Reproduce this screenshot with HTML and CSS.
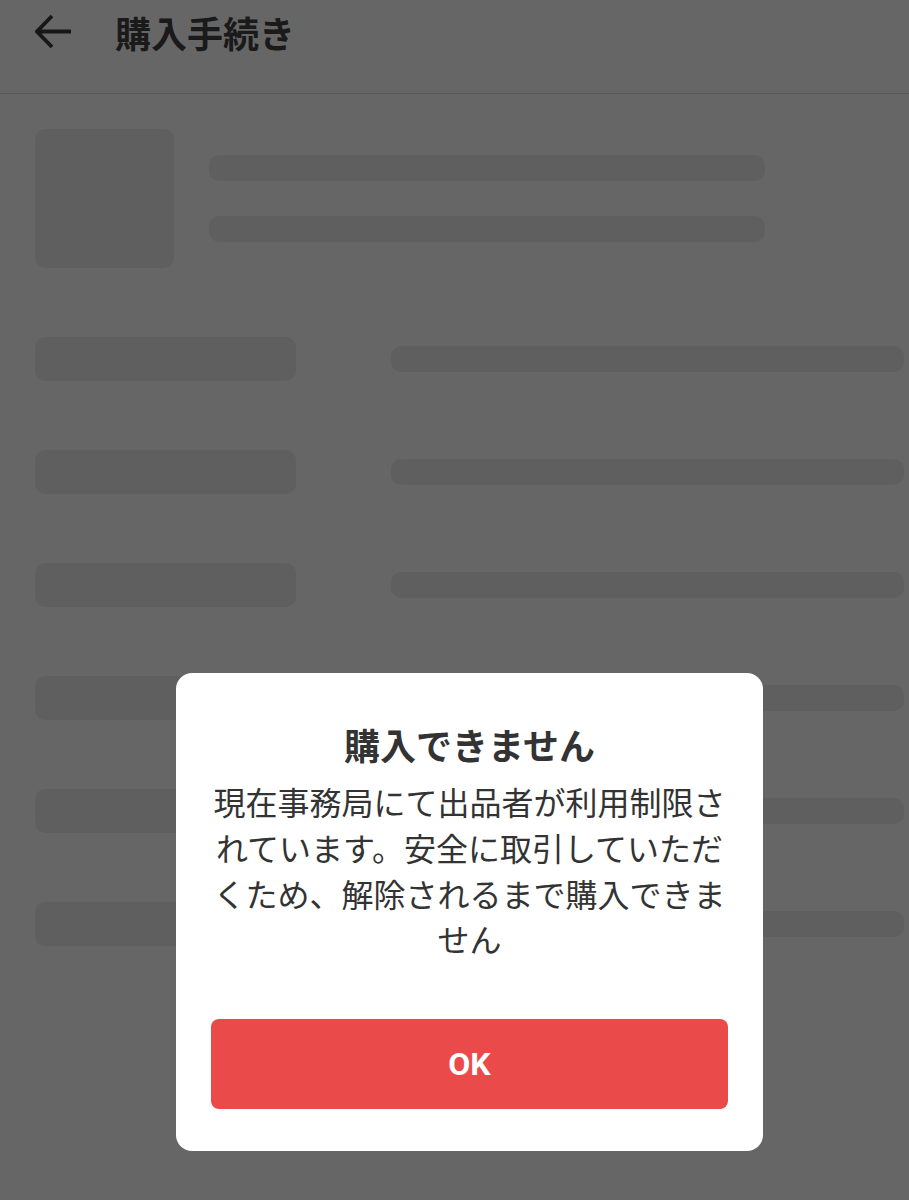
FILE: index.html
```html
<!DOCTYPE html>
<html lang="ja">

<head>
  <meta charset="UTF-8">
  <meta name="viewport" content="width=device-width, initial-scale=1.0">
  <title>購入手続き</title>
  <link rel="stylesheet" href="styles.css">
</head>

<body>
  <!-- ヘッダー -->
  <div class="header">
    <svg class="back" width="36" height="36" viewBox="0 0 36 36">
      <path d="M17 2 L2 17.5 L17 33 M2 17.5 H36" fill="none" stroke="currentColor" stroke-width="3.8" />
    </svg>
    <h1 class="title">購入手続き</h1>
  </div>

  <!-- スケルトン -->
  <div class="content">
    <div class="item">
      <div class="thumb sk"></div>
      <div class="item-lines">
        <div class="line sk"></div>
        <div class="line sk"></div>
      </div>
    </div>
    <div class="row"><div class="label sk"></div><div class="value sk"></div></div>
    <div class="row"><div class="label sk"></div><div class="value sk"></div></div>
    <div class="row"><div class="label sk"></div><div class="value sk"></div></div>
    <div class="row"><div class="label sk"></div><div class="value sk"></div></div>
    <div class="row"><div class="label sk"></div><div class="value sk"></div></div>
    <div class="row"><div class="label sk"></div><div class="value sk"></div></div>
  </div>

  <!-- ダイアログ -->
  <div class="overlay">
    <div class="dialog">
      <h2 class="dialog-title">購入できません</h2>
      <p class="dialog-text">現在事務局にて出品者が利用制限されています。安全に取引していただくため、解除されるまで購入できません</p>
      <button class="ok">OK</button>
    </div>
  </div>
</body>

</html>
```

FILE: styles.css
```css
* {
  margin: 0;
  padding: 0;
  box-sizing: border-box;
}

body {
  background-color: #fff;
  font-family: "Noto Sans CJK JP", "Noto Sans", sans-serif;
  color: #424242;
}

.header {
  display: flex;
  align-items: center;
  height: 94px;
  padding: 0 0 30px 35px;
  border-bottom: 1px solid #dcdcdc;
}

.back {
  color: #3a3a3a;
  margin-right: 44px;
}

.title {
  font-size: 36px;
  font-weight: bold;
  line-height: 1;
}

.content {
  padding: 35px 5px 0 35px;
}

.sk {
  background-color: #eeeeee;
  border-radius: 10px;
}

.item {
  display: flex;
  align-items: center;
  gap: 35px;
  margin-bottom: 69px;
}

.thumb {
  width: 139px;
  height: 139px;
}

.item-lines {
  display: flex;
  flex-direction: column;
  gap: 35px;
}

.line {
  width: 556px;
  height: 26px;
}

.row {
  display: flex;
  align-items: center;
  gap: 95px;
  margin-bottom: 69px;
}

.label {
  width: 261px;
  height: 44px;
}

.value {
  flex: 1;
  height: 26px;
}

.overlay {
  position: fixed;
  top: 0;
  left: 0;
  width: 100%;
  height: 100%;
  background-color: rgba(0, 0, 0, .6);
  display: flex;
  align-items: flex-end;
  padding: 0 0 49px 176px;
}

.dialog {
  width: 587px;
  background-color: #fff;
  border-radius: 16px;
  padding: 49px 35px 42px;
  text-align: center;
  color: #333;
}

.dialog-title {
  font-size: 36px;
  font-weight: bold;
  line-height: 45px;
  margin-bottom: 12px;
}

.dialog-text {
  font-size: 32px;
  line-height: 45.7px;
  color: #333;
}

.ok {
  display: block;
  width: 100%;
  height: 90px;
  margin-top: 57px;
  border: none;
  border-radius: 8px;
  background-color: #ea4a4a;
  color: #fff;
  font-family: Roboto, "Noto Sans", sans-serif;
  font-size: 32px;
  font-weight: bold;
}
```
